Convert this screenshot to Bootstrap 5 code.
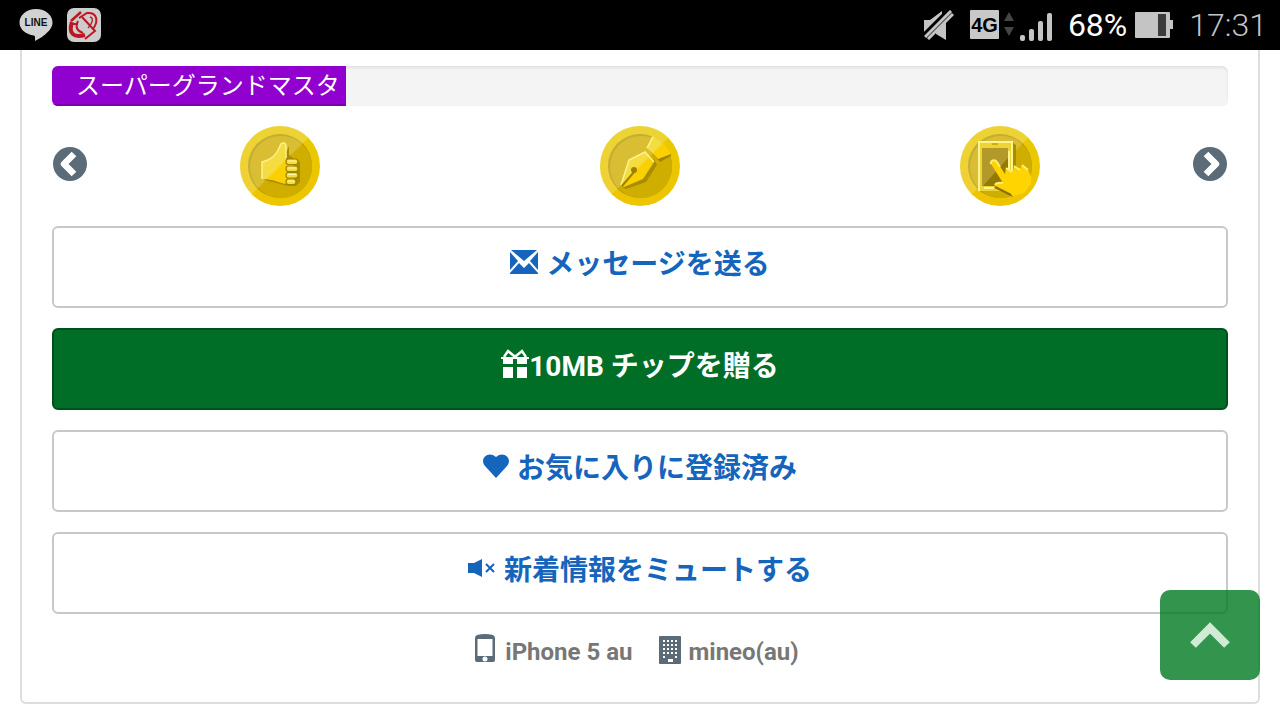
<!DOCTYPE html>
<html lang="ja">
<head>
<meta charset="utf-8">
<meta name="viewport" content="width=device-width, initial-scale=1">
<title>マイページ</title>
<link href="https://cdn.jsdelivr.net/npm/bootstrap@5.3.0/dist/css/bootstrap.min.css" rel="stylesheet">
<style>
  body { font-family: Roboto, "Noto Sans CJK JP", sans-serif; background: #fff; }
  svg { display: block; flex: none; }
  .status-bar { height: 50px; padding: 0 13px 0 18px; background: #000; color: #c4c4c4; font-size: 32px; line-height: 50px; gap: 8px; }
  .status-clock { font-weight: 300; }
  .profile { margin: 0 20px; padding: 16px 30px 32px; border: 2px solid #ddd; border-top: 0; border-radius: 0 0 6px 6px; }
  .rank { height: 40px; border-radius: 6px; background: #f4f4f4; box-shadow: inset 0 2px 3px rgba(0,0,0,.08); }
  .rank .progress-bar { padding: 0 0 0 24px; background: #9000ce; font-size: 24px; line-height: 36px; text-align: left; box-shadow: inset 0 -2px 0 #7a00ad; }
  .coins { margin: 20px 0; }
  .round-btn { width: 36px; height: 36px; margin-bottom: 4px; }
  .actions { gap: 20px; }
  .wide-btn { height: 82px; padding: 14px 24px 24px; border: 2px solid #c8c8c8; border-radius: 6px; background: #fff; color: #1565bd; font-size: 28px; line-height: 36px; font-weight: 700; }
  .wide-btn span { padding-top: 6px; }
  .wide-btn:hover { background: #f4f4f4; color: #1565bd; border-color: #c8c8c8; }
  .wide-btn.tip, .wide-btn.tip:hover { background: #006e27; border-color: #00501c; color: #fff; }
  .device { margin-top: 20px; padding-right: 8px; color: #777; font-size: 24px; line-height: 36px; font-weight: 700; column-gap: 26px; }
  .to-top { right: 20px; bottom: 40px; width: 100px; height: 90px; border-radius: 10px; background: rgba(0,123,32,.8); }
</style>
</head>
<body>
<svg width="0" height="0" class="position-absolute" aria-hidden="true">
  <defs>
    <linearGradient id="rim" x1="0" y1="0" x2="0" y2="1"><stop offset="0" stop-color="#e8c900"/><stop offset="1" stop-color="#edc500"/></linearGradient>
    <linearGradient id="gold" gradientUnits="userSpaceOnUse" x1="0" y1="0" x2="80" y2="80"><stop offset=".49" stop-color="#f5dc40"/><stop offset=".51" stop-color="#fad000"/></linearGradient>
    <clipPath id="disc"><circle cx="40" cy="40" r="40"/></clipPath>
    <g id="coin">
      <circle cx="40" cy="40" r="40" fill="url(#rim)"/>
      <circle cx="40" cy="40" r="32" fill="#b59b00"/>
      <circle cx="41" cy="41" r="31" fill="#d0ae00"/>
      <path d="M0 0H80L12 68L0 80Z" fill="#fff" opacity=".2" clip-path="url(#disc)"/>
    </g>
  </defs>
</svg>

<header class="status-bar d-flex align-items-center sticky-top">
  <svg width="36" height="36" viewBox="0 0 36 36" role="img" aria-label="LINE"><path d="M18 2C8.600 2 1.500 8 1.500 15.500C1.500 22.500 8 27.500 16 28.500C17.500 29 17 31 17 34C21 32 34.500 24.500 34.500 15.500C34.500 8 27.400 2 18 2Z" fill="#d2d2d2"/><text x="18" y="19" text-anchor="middle" font-family="Liberation Sans, sans-serif" font-size="10" font-weight="700" fill="#111">LINE</text></svg>
  <svg class="ms-1 me-auto" width="36" height="36" viewBox="4 0 36 36" aria-hidden="true"><rect x="5" y="1" width="34" height="34" rx="7" fill="#cdcdcd"/><g fill="none" stroke="#bd1822"><path d="M9 14L19 5" stroke-width="2.500"/><path d="M17 11L25 6C35 5 37 14 31 22" stroke-width="2"/><path d="M28 10C33 11 29 18 26 21" stroke-width="1.300"/><path d="M10 15C6 27 12 31 23 28" stroke-width="4"/><path d="M8 17H16M16 14C13 20 15 24 21 26M20 10L33 24L23 32" stroke-width="2"/></g></svg>
  <svg width="30" height="30" viewBox="0 0 30 30" role="img" aria-label="消音"><g fill="#c4c4c4"><path d="M0 10H6L18 1V4L0 22Z"/><path d="M12 20L22 11V30L12 24Z"/></g><path d="M27 1L0 28" stroke="#000" stroke-width="8"/><path d="M27 1L1 27M29 4L4 29" stroke="#c4c4c4" stroke-width="3"/></svg>
  <svg class="ms-2 me-1" width="86" height="34" viewBox="0 0 86 34" role="img" aria-label="4G"><rect y="2" width="29" height="29" rx="1" fill="#c8c8c8"/><text x="14.500" y="24" text-anchor="middle" font-family="Liberation Sans, sans-serif" font-size="20" font-weight="700" fill="#000">4G</text><path d="M34 13L39 4L44 13ZM34 19H44L39 28Z" fill="#454545"/><g fill="#c4c4c4"><rect x="50" y="27" width="5" height="6" rx="2"/><rect x="59" y="21" width="5" height="12" rx="2"/><rect x="68" y="13" width="5" height="20" rx="2"/><rect x="77" y="5" width="5" height="28" rx="2"/></g></svg>
  <span class="text-white">68%</span>
  <svg class="me-2" width="38" height="26" viewBox="4 0 38 26" role="img" aria-label="バッテリー"><path d="M5 0H38Q39 0 39 1V8H42V17H39V25Q39 26 38 26H5Q4 26 4 25V1Q4 0 5 0Z" fill="#c4c4c4"/><path d="M27 2H35V24H27Z" fill="#3c3c3c"/></svg>
  <span class="status-clock">17:31</span>
</header>

<main class="profile">
  <div class="progress rank" role="progressbar" aria-label="ランク" aria-valuenow="25" aria-valuemin="0" aria-valuemax="100">
    <div class="progress-bar w-25">スーパーグランドマスタ</div>
  </div>

  <div class="coins d-flex align-items-center">
    <button type="button" class="btn p-0 border-0 round-btn" aria-label="前へ"><svg width="36" height="36" viewBox="0 0 36 36"><circle cx="18" cy="18" r="17" fill="#5b6b77"/><path d="M22 8L12 18L22 28" fill="none" stroke="#fff" stroke-width="6.500" stroke-linejoin="round"/></svg></button>
    <div class="row g-0 flex-fill mx-2 px-1">
      <div class="col d-flex justify-content-center">
        <svg width="80" height="80" viewBox="0 0 80 80" role="img" aria-label="いいね"><use href="#coin"/><path d="M24 54L40 58L48 60H56L60 56V36L53 32L49 29L49 20L45 29L34 39Z" fill="#a98d00"/><path d="M22 36C32 34 37 29 40 20C41 16 46 16 46 20V33L53 34V58H46C39 57 34 53 22 53Z" fill="url(#gold)"/><path d="M22 53V36C32 34 37 29 40 20C41 16 46 16 46 20V32" fill="none" stroke="#fff08c" stroke-width="1.500"/><g fill="#f5dc40" stroke="#9d8500" stroke-width="1.200"><rect x="46" y="33" width="12" height="5.500" rx="2.500"/><rect x="46" y="40" width="12" height="5.500" rx="2.500"/><rect x="46" y="46.500" width="12" height="5.500" rx="2.500"/><rect x="46" y="53" width="10" height="5.500" rx="2.500"/></g><path d="M48 35H56M48 42H56M48 48.500H56M48 55H54" stroke="#fff7ae"/></svg>
      </div>
      <div class="col d-flex justify-content-center">
        <svg width="80" height="80" viewBox="0 0 80 80" role="img" aria-label="ペン"><use href="#coin"/><path d="M22 61L26 63L46 56L57 39L54 33Z" fill="#a98d00"/><path d="M49 24L60 36L71 30V27L58 31Z" fill="#a08600"/><path d="M52 10L47 22L58 33L71 28Q65 16 52 10Z" fill="url(#gold)"/><path d="M53 11L47 22" stroke="#fff48c" stroke-width="1.500"/><path d="M21 59L29 34L45 26L54 36L43 53L24 61Z" fill="url(#gold)"/><path d="M21 59L29 34L45 26L54 36" fill="none" stroke="#fff48c" stroke-width="1.500"/><path d="M22 60L34 46" stroke="#9a8200" stroke-width="2"/><circle cx="34" cy="44" r="3" fill="#9a8200"/></svg>
      </div>
      <div class="col d-flex justify-content-center">
        <svg width="80" height="80" viewBox="0 0 80 80" role="img" aria-label="スマートフォン"><use href="#coin"/><path d="M53 17L56 19V49L51 59Z" fill="#a98d00"/><rect x="19" y="16" width="33" height="49" rx="1" fill="#eed335"/><path d="M19 65V16H52V51" fill="none" stroke="#fff493" stroke-width="2"/><path d="M22 22H48V60H22Z" fill="#b2992a"/><path d="M48 32V60H23Z" fill="#947a00"/><path d="M49 25V50" stroke="#fff493" stroke-width="2"/><path d="M32 18H38" stroke="#a38b00"/><path d="M24 62H34" stroke="#fff493" stroke-width="2"/><path d="M35 61L53 71L50 65L38 58Z" fill="#8c7000"/><path d="M31 38C30 34 35 33 37 36L45 48L46 42L53 45L54 40L60 43L62 39L68 44L71 51V58L64 67L53 70L36 61C33 57 37 56 43 57Z" fill="#ffd400"/><path d="M35 61L51 69" stroke="#8c7000" stroke-width="2.500"/><path d="M31 38C30 34 35 33 37 36L40 41M46 42L52 46M54 40L60 44M62 39L68 44M35 59Q36 56 43 57" fill="none" stroke="#ffef72" stroke-width="2"/></svg>
      </div>
    </div>
    <button type="button" class="btn p-0 border-0 round-btn" aria-label="次へ"><svg width="36" height="36" viewBox="0 0 36 36"><circle cx="18" cy="18" r="17" fill="#5b6b77"/><path d="M14 8L24 18L14 28" fill="none" stroke="#fff" stroke-width="6.500" stroke-linejoin="round"/></svg></button>
  </div>

  <div class="actions d-grid">
    <button type="button" class="btn wide-btn d-flex justify-content-center align-items-center gap-2">
      <svg width="28" height="24" viewBox="0 0 28 24" fill="currentColor" aria-hidden="true"><path d="M1 0H27L14 11ZM0 2L8 11L0 20ZM28 2V20L20 11ZM0 24V23L9 13L14 18L19 13L28 23V24Z"/></svg>
      <span>メッセージを送る</span>
    </button>
    <button type="button" class="btn wide-btn tip d-flex justify-content-center align-items-center">
      <svg width="28" height="30" viewBox="0 0 28 30" fill="currentColor" aria-hidden="true"><path d="M0 8H28V10H26V15H16V10H12V15H2V10H0ZM2 18H12V29H2ZM16 18H26V29H16Z"/><path d="M3 8L7 2L13 7H15L21 2L25 8" fill="none" stroke="currentColor" stroke-width="2.500"/></svg>
      <span>10MB チップを贈る</span>
    </button>
    <button type="button" class="btn wide-btn d-flex justify-content-center align-items-center gap-2">
      <svg width="26" height="24" viewBox="0 0 26 24" fill="currentColor" aria-hidden="true"><path d="M13 24L2 12C-4 5 5-4 13 3C21-4 30 5 24 12Z"/></svg>
      <span>お気に入りに登録済み</span>
    </button>
    <button type="button" class="btn wide-btn d-flex justify-content-center align-items-center gap-2">
      <svg width="28" height="20" viewBox="0 0 28 20" fill="currentColor" aria-hidden="true"><path d="M0 5H6L14 1V19L6 15H0Z"/><path d="M18 6L26 14M26 6L18 14" stroke="currentColor" stroke-width="2"/></svg>
      <span>新着情報をミュートする</span>
    </button>
  </div>

  <div class="device d-flex flex-wrap justify-content-center">
    <div class="d-flex gap-2">
      <svg width="24" height="28" viewBox="0 0 24 28" aria-hidden="true"><path d="M4 1Q12-1 20 1Q22 2 22 4V26Q22 28 20 28H4Q2 28 2 26V4Q2 2 4 1ZM4.500 5V22H19.500V5Z" fill="#5b6b77" fill-rule="evenodd"/><circle cx="12" cy="25" r="2.500" fill="#fff"/></svg>
      <span>iPhone 5 au</span>
    </div>
    <div class="d-flex gap-2">
      <svg width="22" height="30" viewBox="0 -2 22 30" aria-hidden="true"><rect width="22" height="28" rx="1" fill="#5b6b77"/><path d="M4 5H18M4 9H18M4 13H18M4 17H18M4 21H18" stroke="#fff" stroke-width="2" stroke-dasharray="2 2"/><path d="M8 20H14V22H8Z" fill="#5b6b77"/><path d="M9 23H14V26H9Z" fill="#fff"/></svg>
      <span>mineo(au)</span>
    </div>
  </div>
</main>

<button type="button" class="btn to-top position-fixed border-0 p-0 d-flex justify-content-center align-items-center" aria-label="ページの先頭へ">
  <svg width="40" height="28" viewBox="0 0 40 28" aria-hidden="true"><path d="M3 24L20 7L37 24" fill="none" stroke="#d0ead4" stroke-width="8"/></svg>
</button>
<script src="https://cdn.jsdelivr.net/npm/bootstrap@5.3.0/dist/js/bootstrap.bundle.min.js"></script>
</body>
</html>
